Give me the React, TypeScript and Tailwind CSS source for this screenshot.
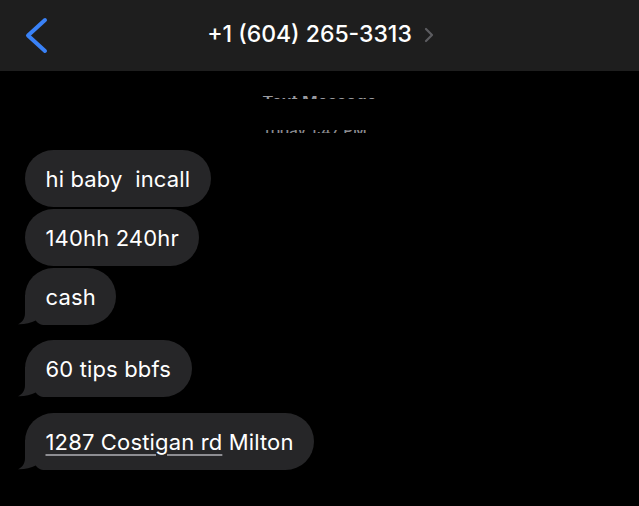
import React from "react";

type Msg = { text: React.ReactNode; tail?: boolean; gap?: string };

const messages: Msg[] = [
  { text: "hi baby\u00a0 incall" },
  { text: "140hh 240hr", gap: "mt-[2px]" },
  { text: "cash", tail: true, gap: "mt-[2px]" },
  { text: "60 tips bbfs", tail: true, gap: "mt-[15px]" },
  {
    text: (
      <>
        <span className="underline decoration-[#8d8d92] decoration-[1.5px] underline-offset-[4px]">
          1287 Costigan rd
        </span>{" "}
        Milton
      </>
    ),
    tail: true,
    gap: "mt-[16px]",
  },
];

function Tail() {
  return (
    <svg
      className="absolute left-[-9px] bottom-0"
      width="40"
      height="30"
      viewBox="0 0 40 30"
      fill="#262628"
    >
      <path d="M9 0 L9 18 C9 24 6 27.5 2 29.3 C8 29.6 15 28 19.7 25.5 C21.5 28 24 29.5 27 30 L40 30 L40 0 Z" />
    </svg>
  );
}

function Bubble({ msg }: { msg: Msg }) {
  return (
    <div
      className={`relative flex h-[57px] items-center rounded-[28.5px] bg-[#262628] px-[20.5px] ${msg.gap ?? ""}`}
    >
      {msg.tail && <Tail />}
      <span className="relative whitespace-pre text-[22px] leading-none tracking-[0.15px] text-white">
        {msg.text}
      </span>
    </div>
  );
}

export default function App() {
  return (
    <div className="h-[506px] w-[639px] overflow-hidden bg-black font-['Inter','Liberation_Sans',sans-serif] antialiased">
      {/* header */}
      <header className="grid h-[71px] grid-cols-[1fr_auto_1fr] items-center bg-[#1e1e1e]">
        <div className="flex items-center pl-[23px]">
          <svg width="26" height="40" viewBox="0 0 26 40" fill="none">
            <path
              d="M22 4 L5 19.5 L22 35"
              stroke="#3a82f7"
              strokeWidth="4"
              strokeLinecap="round"
              strokeLinejoin="round"
            />
          </svg>
        </div>
        <div className="-mt-[2px] flex items-center gap-[12px] pl-[2px]">
          <span className="text-[23px] font-medium leading-none text-white">
            +1 (604) 265-3313
          </span>
          <svg width="10" height="16" viewBox="0 0 10 16" fill="none">
            <path
              d="M2 2 L8 8 L2 14"
              stroke="#5c5c60"
              strokeWidth="2.2"
              strokeLinecap="round"
              strokeLinejoin="round"
            />
          </svg>
        </div>
        <div />
      </header>

      {/* service label, partly hidden as in the capture */}
      <div className="flex flex-col items-center">
        <div className="mt-[25px] h-[3px] overflow-hidden">
          <div className="-mt-[2px] text-[17px] font-semibold leading-[17px] text-[#9a9a9f]">
            Text Message
          </div>
        </div>
        <div className="mt-[31px] h-[3px] overflow-hidden pr-[10px]">
          <div className="-mt-[7px] text-[15px] font-medium leading-[15px] text-[#8a8a8f]">
            Today 1:47 PM
          </div>
        </div>
      </div>

      {/* messages */}
      <div className="mt-[17px] flex flex-col items-start pl-[25px]">
        {messages.map((m, i) => (
          <Bubble key={i} msg={m} />
        ))}
      </div>
    </div>
  );
}
